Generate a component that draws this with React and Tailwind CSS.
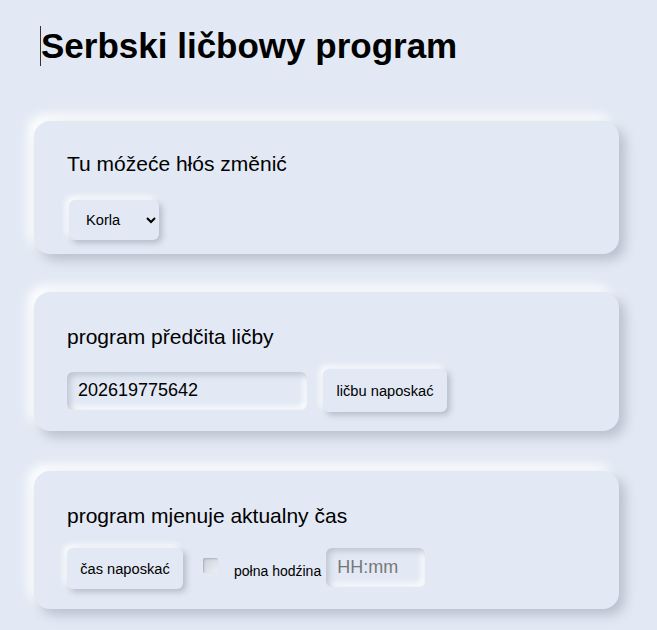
import React, { useState } from 'react';

const raised = 'shadow-[6px_6px_12px_#b8c0cf,-6px_-6px_12px_#ffffff]';
const raisedSmall = 'shadow-[3px_3px_6px_#b3bbca,-3px_-3px_6px_#ffffff]';
const inset = 'shadow-[inset_3px_3px_6px_#bcc4d2,inset_-3px_-3px_6px_#ffffff]';

const App = () => {
  const [voice, setVoice] = useState('Korla');
  const [number, setNumber] = useState('202619775642');
  const [fullHour, setFullHour] = useState(false);
  const [time, setTime] = useState('');

  return (
    <div className="min-h-[630px] bg-[#e2e9f4] px-[34px] pt-[26px] pb-6 font-['Liberation_Sans',Arial,sans-serif] text-black">
      {/* nadpis z kursorom */}
      <h1 className="ml-[6px] border-l border-[#333] text-[35px] leading-[40px] font-bold">Serbski ličbowy program</h1>

      <div className={`mt-[55px] w-[585px] rounded-[16px] bg-[#e2e9f4] pl-[33px] pr-8 pt-[31px] pb-[14px] ${raised}`}>
        <p className="text-[21px] leading-[24px]">Tu móžeće hłós změnić</p>
        <select
          value={voice}
          onChange={(e) => setVoice(e.target.value)}
          className={`mt-[24px] ml-[2px] h-[40px] w-[90px] rounded-[6px] bg-[#e2e9f4] pl-[13px] text-[14.67px] outline-none ${raisedSmall}`}
        >
          <option>Korla</option>
          <option>Hana</option>
        </select>
      </div>

      <div className={`mt-[38px] w-[585px] rounded-[16px] bg-[#e2e9f4] pl-[33px] pr-8 pt-[33px] pb-[19px] ${raised}`}>
        <p className="text-[21px] leading-[24px]">program předčita ličby</p>
        <div className="mt-[20px] flex items-center gap-4">
          <input
            value={number}
            onChange={(e) => setNumber(e.target.value)}
            className={`h-[38px] w-[240px] rounded-[6px] bg-[#e2e9f4] px-[11px] text-[18px] outline-none ${inset}`}
          />
          <button className={`h-[43px] w-[124px] rounded-[6px] bg-[#e2e9f4] text-[14.67px] ${raisedSmall}`}>ličbu naposkać</button>
        </div>
      </div>

      <div className={`mt-[40px] w-[585px] rounded-[16px] bg-[#e2e9f4] pl-[33px] pr-8 pt-[33px] pb-[20px] ${raised}`}>
        <p className="text-[21px] leading-[24px]">program mjenuje aktualny čas</p>
        <div className="mt-[20px] flex items-center">
          <button className={`h-[41px] w-[116px] rounded-[6px] bg-[#e2e9f4] text-[14.67px] ${raisedSmall}`}>čas naposkać</button>
          <input
            type="checkbox"
            checked={fullHour}
            onChange={() => setFullHour(!fullHour)}
            className="ml-[20px] mb-[6px] h-[15px] w-[15px] appearance-none rounded-[2px] bg-gradient-to-br from-[#c9cfd9] to-[#eef1f6] shadow-[inset_1px_1px_2px_#a9b0bc]"
          />
          <label className="ml-[16px] mt-[6px] text-[14px]">połna hodźina</label>
          <input
            value={time}
            onChange={(e) => setTime(e.target.value)}
            placeholder="HH:mm"
            className={`ml-[5px] mb-[2px] h-[39px] w-[99px] rounded-[6px] bg-[#e2e9f4] px-[11px] text-[18px] outline-none placeholder:text-[#777] ${inset}`}
          />
        </div>
      </div>
    </div>
  );
};

export default App;
